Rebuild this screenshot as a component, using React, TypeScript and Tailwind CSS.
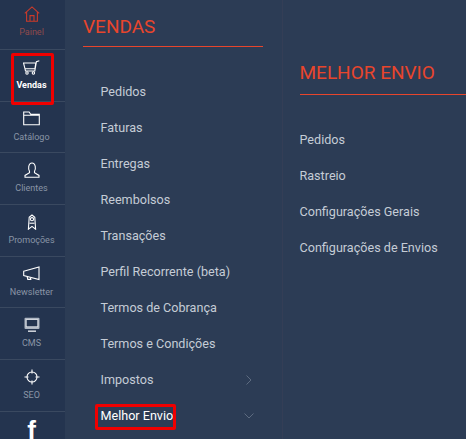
import React from "react";

const stroke = { fill: "none", stroke: "currentColor", strokeWidth: 1.1 } as const;

const icons: Record<string, React.ReactNode> = {
  home: (
    <svg width="16" height="16" viewBox="0 0 16 16" {...stroke}>
      <path d="M0.8 7.4 8 0.9l7.2 6.5M2.6 6v9.2h10.8V6M6 15V9.6h4V15" />
    </svg>
  ),
  cart: (
    <svg width="17" height="15" viewBox="0 0 17 15" {...stroke}>
      <path d="M0.5 3h12.3l-.9 5.8H2zM2 8.8l.5 2.2h9.3L13.4 1.6l2.9-.9" />
      <circle cx="4" cy="13" r="1.2" />
      <circle cx="10.4" cy="13" r="1.2" />
    </svg>
  ),
  folder: (
    <svg width="17" height="15" viewBox="0 0 17 15" {...stroke}>
      <path d="M0.7 13.8V1h5.4l1.6 2.2h8.6v10.6zM0.7 4.2h16" />
    </svg>
  ),
  user: (
    <svg width="16" height="16" viewBox="0 0 16 16" {...stroke}>
      <path d="M5.5 9.4C4 7.4 4.2 1 8 1s4 6.4 2.5 8.4v1.4l4.5 2.6v1.9H1v-1.9l4.5-2.6z" />
    </svg>
  ),
  ribbon: (
    <svg width="10" height="16" viewBox="0 0 10 16" {...stroke}>
      <path d="M2.2 3.2 5 1l2.8 2.2 .8 12-3.6-2.8-3.6 2.8z" />
      <circle cx="5" cy="5.2" r="1.6" />
      <path d="M2.5 9.2h5" />
    </svg>
  ),
  horn: (
    <svg width="17" height="15" viewBox="0 0 17 15" {...stroke}>
      <path d="M0.7 5.2 16 .9v12.6L0.7 9.6zM4 10.2l.8 3.2h3l-.7-2.3" />
    </svg>
  ),
  monitor: (
    <svg width="16" height="16" viewBox="0 0 16 16" fill="none">
      <rect x="0.5" y="0.7" width="15" height="11.4" rx="1" fill="#aeb6c2" />
      <rect x="2.2" y="2.6" width="11.6" height="7.2" fill="#24344f" stroke="#e8eaee" strokeWidth="0.8" />
      <path d="M4 14.2h8" stroke="#c9ced6" strokeWidth="1.6" />
    </svg>
  ),
  target: (
    <svg width="16" height="16" viewBox="0 0 16 16" {...stroke}>
      <circle cx="8" cy="8" r="5" />
      <path d="M8 0.5v4M8 11.5v4M0.5 8h4M11.5 8h4" />
    </svg>
  ),
};

const side = [
  { i: "home", t: "Painel", c: "text-[#c93a2a]", tc: "text-[#8f4a4c]" },
  { i: "cart", t: "Vendas", c: "text-white", tc: "text-white font-bold" },
  { i: "folder", t: "Catálogo", c: "text-white", tc: "text-[#8a95a6]" },
  { i: "user", t: "Clientes", c: "text-white", tc: "text-[#8a95a6]" },
  { i: "ribbon", t: "Promoções", c: "text-white", tc: "text-[#8a95a6]" },
  { i: "horn", t: "Newsletter", c: "text-white", tc: "text-[#8a95a6]" },
  { i: "monitor", t: "CMS", c: "text-white", tc: "text-[#8a95a6]" },
  { i: "target", t: "SEO", c: "text-white", tc: "text-[#8a95a6]" },
];

const menu = [
  "Pedidos",
  "Faturas",
  "Entregas",
  "Reembolsos",
  "Transações",
  "Perfil Recorrente (beta)",
  "Termos de Cobrança",
  "Termos e Condições",
];

const sub = ["Pedidos", "Rastreio", "Configurações Gerais", "Configurações de Envios"];

export default function App() {
  return (
    <div className="relative flex h-[439px] w-[466px] overflow-hidden bg-[#2c3c55] font-['Roboto',sans-serif]">
      <aside className="flex w-[65px] shrink-0 flex-col bg-[#24344f]">
        {side.map((s, idx) => (
          <div
            key={s.t}
            className={`flex shrink-0 flex-col items-center justify-start border-b border-[#3a4960] pr-[2px] ${idx === 0 ? "h-[50px] pt-[5px]" : "h-[51.7px] pt-[8px]"}`}
          >
            <div className={`flex h-[18px] items-center ${s.c}`}>{icons[s.i]}</div>
            <span className={`mt-[2px] text-[9px] leading-[14px] ${s.tc}`}>{s.t}</span>
          </div>
        ))}
        <div className="flex justify-center pt-[6px] pr-[2px] font-['Liberation_Sans',sans-serif] text-[26px] leading-[24px] font-bold text-white">
          f
        </div>
      </aside>

      <section className="w-[217px] shrink-0 pt-[14px] pl-[18px]">
        <h1 className="text-[19px] leading-[26px] font-normal text-[#e8452c]">VENDAS</h1>
        <div className="mt-[6px] h-px w-[180px] bg-[#e8452c]" />
        <ul className="mt-[27px] pl-[17.5px]">
          {menu.map((m) => (
            <li key={m} className="h-[36px] text-[12.6px] leading-[36px] text-[#c5ccd6]">
              {m}
            </li>
          ))}
          <li className="flex h-[36px] w-[162px] items-center justify-between text-[12.6px] text-[#c5ccd6]">
            Impostos
            <svg width="8" height="12" viewBox="0 0 8 12" fill="none" stroke="#5d6b80" className="mr-[10px]">
              <path d="M1.5 1.5 6 6l-4.5 4.5" />
            </svg>
          </li>
          <li className="flex h-[36px] w-[162px] items-center justify-between text-[12.6px] text-white">
            Melhor Envio
            <svg width="12" height="8" viewBox="0 0 12 8" fill="none" stroke="#5d6b80" className="mr-[8px]">
              <path d="M1.5 1.5 6 6l4.5-4.5" />
            </svg>
          </li>
        </ul>
      </section>

      <section className="flex-1 border-l border-[#343e56] pt-[60px] pl-[16.5px]">
        <h2 className="text-[19px] leading-[26px] font-normal text-[#e8452c]">MELHOR ENVIO</h2>
        <div className="mt-[8px] h-px bg-[#e8452c]" />
        <ul className="mt-[27px]">
          {sub.map((m) => (
            <li key={m} className="h-[36px] text-[12.6px] leading-[36px] text-[#c5ccd6]">
              {m}
            </li>
          ))}
        </ul>
      </section>

      <div className="absolute top-[53px] left-[11px] h-[52px] w-[43px] rounded-[2px] border-[3px] border-[#f00000]" />
      <div className="absolute top-[404px] left-[95px] h-[26px] w-[81px] rounded-[2px] border-[3px] border-[#f00000]" />
    </div>
  );
}
